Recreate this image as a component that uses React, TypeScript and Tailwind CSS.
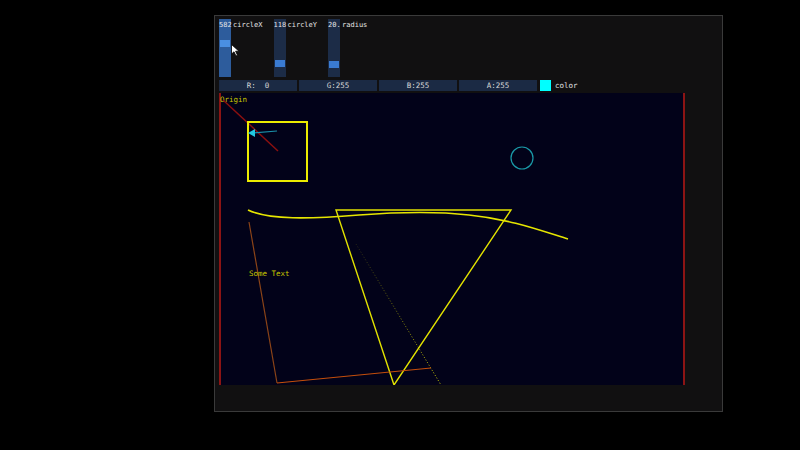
import React from 'react';

const mono = { fontFamily: '"DejaVu Sans Mono", "Liberation Mono", monospace' };

interface SliderProps {
  value: string;
  label: string;
  grabTop: number;
  active?: boolean;
}

const VSlider: React.FC<SliderProps> = ({ value, label, grabTop, active }) => (
  <div className="flex gap-[2px]">
    <div
      className={`relative w-[12px] h-[58px] ${active ? 'bg-[#2d5c9c]' : 'bg-[#1c2c47]'}`}
    >
      <div
        className={`absolute left-[1px] right-[1px] h-[7px] ${active ? 'bg-[#4a8fe2]' : 'bg-[#3a7bd2]'}`}
        style={{ top: grabTop }}
      />
      <span className="absolute left-0 top-[3px] text-[7px] leading-[7px] text-[#e6e6e6] whitespace-nowrap">
        {value}
      </span>
    </div>
    <span className="mt-[3px] text-[7px] leading-[7px] text-[#e6e6e6] whitespace-nowrap">{label}</span>
  </div>
);

const ColorBox: React.FC<{ text: string }> = ({ text }) => (
  <div className="w-[78px] h-[11px] bg-[#1b2a44] flex items-center justify-center text-[7.5px] leading-[8px] text-[#d8d8d8] whitespace-pre">
    {text}
  </div>
);

const Canvas: React.FC = () => (
  <div className="w-[466px] h-[292px] bg-[#020219]">
    <svg width="466" height="292" viewBox="0 0 466 292" className="block">
      <defs>
        <linearGradient id="fade" x1="137" y1="151" x2="222" y2="292" gradientUnits="userSpaceOnUse">
          <stop offset="0" stopColor="#e8e800" stopOpacity="0.15" />
          <stop offset="1" stopColor="#e8e800" stopOpacity="0.9" />
        </linearGradient>
      </defs>
      {/* frame edges */}
      <line x1="1" y1="0" x2="1" y2="292" stroke="#8c1414" strokeWidth="2" />
      <line x1="465" y1="0" x2="465" y2="292" stroke="#8c1414" strokeWidth="2" />

      <text x="1" y="9" fontSize="7.5" fill="#c8c800" style={mono}>Origin</text>
      <line x1="4" y1="7" x2="59" y2="58" stroke="#8a1010" strokeWidth="1.5" />

      {/* rect */}
      <rect x="29" y="29" width="59" height="59" fill="none" stroke="#ecec00" strokeWidth="2" />

      {/* arrow */}
      <line x1="58" y1="38" x2="34" y2="40" stroke="#1a8fa8" strokeWidth="1.2" />
      <polygon points="29,40 36,36 36,44" fill="#22c8e0" />

      {/* circle */}
      <circle cx="303" cy="65" r="11" fill="none" stroke="#1a9aa8" strokeWidth="1.2" />

      {/* bezier */}
      <path
        d="M29,117 C50,127 90,126 140,122 C180,119 215,118 250,122 C290,126 320,137 349,146"
        fill="none"
        stroke="#e6e600"
        strokeWidth="1.6"
      />

      {/* triangle */}
      <polygon points="117,117 292,117 175,292" fill="none" stroke="#e2e200" strokeWidth="1.4" />

      {/* dotted fading line */}
      <line x1="137" y1="151" x2="222" y2="292" stroke="url(#fade)" strokeWidth="1" strokeDasharray="1 2" />

      {/* polyline */}
      <line x1="30" y1="129" x2="58" y2="290" stroke="#8c4418" strokeWidth="1.2" />
      <line x1="58" y1="290" x2="212" y2="275" stroke="#c44e0c" strokeWidth="1.2" />

      <text x="30" y="183" fontSize="7.5" fill="#c8c800" style={mono}>Some Text</text>
    </svg>
  </div>
);

export default function App() {
  return (
    <div className="w-[800px] h-[450px] bg-black overflow-hidden" style={mono}>
      <div className="relative ml-[214px] mt-[15px] w-[509px] h-[397px] bg-[#111011] border border-[#3a3a3a] pl-[4px] pt-[3px] flex flex-col">
        <div className="flex gap-[11px]">
          <VSlider value="582" label="circleX" grabTop={21} active />
          <VSlider value="118" label="circleY" grabTop={41} />
          <VSlider value="20." label="radius" grabTop={42} />
        </div>

        <div className="flex items-center gap-[2px] mt-[3px]">
          <ColorBox text="R:  0" />
          <ColorBox text="G:255" />
          <ColorBox text="B:255" />
          <ColorBox text="A:255" />
          <div className="w-[11px] h-[11px] bg-[#00ffff] ml-[1px]" />
          <span className="ml-[2px] text-[7.5px] leading-[8px] text-[#e0e0e0]">color</span>
        </div>

        <div className="mt-[2px]">
          <Canvas />
        </div>

        {/* mouse cursor */}
        <svg
          className="absolute left-[16px] top-[28px]"
          width="9"
          height="13"
          viewBox="0 0 9 13"
        >
          <path d="M0.5,0.5 L0.5,10 L3,7.8 L5,12 L6.5,11.3 L4.6,7.2 L8,7.2 Z" fill="#ffffff" stroke="#000000" strokeWidth="0.8" />
        </svg>
      </div>
    </div>
  );
}
